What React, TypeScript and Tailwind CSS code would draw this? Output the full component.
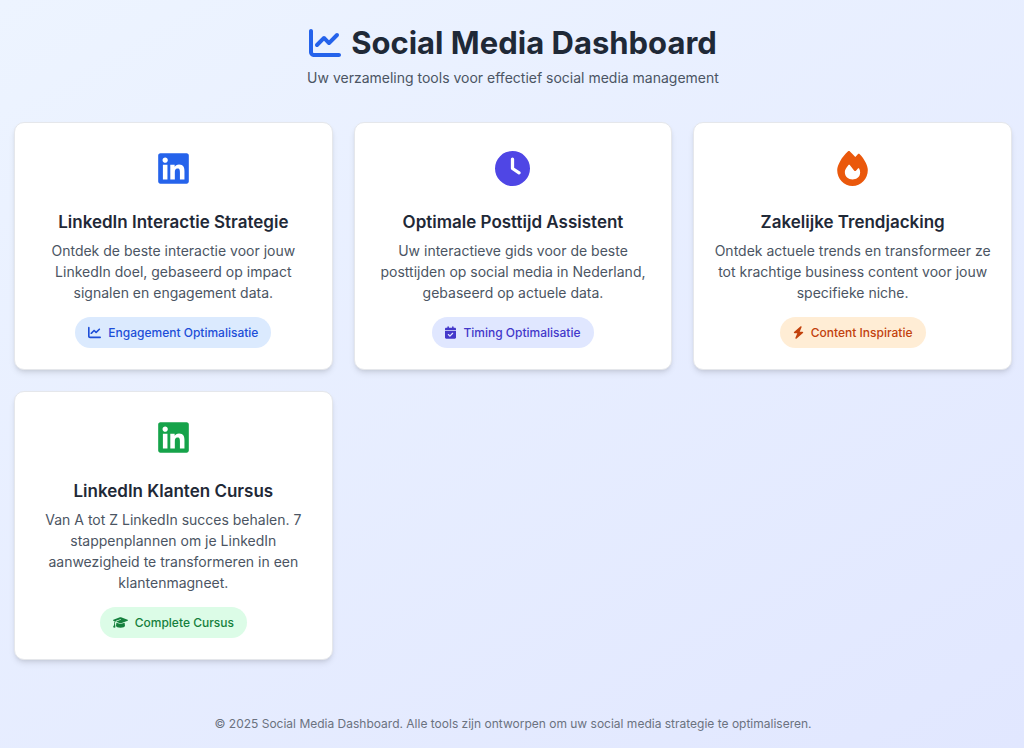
import type { IconType } from 'react-icons';
import {
  FaBolt,
  FaCalendarCheck,
  FaChartLine,
  FaClock,
  FaFire,
  FaGraduationCap,
  FaLinkedin,
} from 'react-icons/fa6';

interface Tool {
  title: string;
  description: string;
  tag: string;
  Icon: IconType;
  TagIcon: IconType;
  iconClass: string;
  tagIconClass: string;
  tagClass: string;
}

const tools: Tool[] = [
  {
    title: 'LinkedIn Interactie Strategie',
    description:
      'Ontdek de beste interactie voor jouw LinkedIn doel, gebaseerd op impact signalen en engagement data.',
    tag: 'Engagement Optimalisatie',
    Icon: FaLinkedin,
    TagIcon: FaChartLine,
    iconClass: 'text-[#2563eb]',
    tagIconClass: 'w-[13px]',
    tagClass: 'bg-[#dbeafe] text-[#1d4ed8]',
  },
  {
    title: 'Optimale Posttijd Assistent',
    description:
      'Uw interactieve gids voor de beste posttijden op social media in Nederland, gebaseerd op actuele data.',
    tag: 'Timing Optimalisatie',
    Icon: FaClock,
    TagIcon: FaCalendarCheck,
    iconClass: 'text-[#4f46e5]',
    tagIconClass: 'w-[11px]',
    tagClass: 'bg-[#e0e7ff] text-[#4338ca]',
  },
  {
    title: 'Zakelijke Trendjacking',
    description:
      'Ontdek actuele trends en transformeer ze tot krachtige business content voor jouw specifieke niche.',
    tag: 'Content Inspiratie',
    Icon: FaFire,
    TagIcon: FaBolt,
    iconClass: 'text-[#ea580c]',
    tagIconClass: 'w-[11px]',
    tagClass: 'bg-[#ffedd5] text-[#c2410c]',
  },
  {
    title: 'LinkedIn Klanten Cursus',
    description:
      'Van A tot Z LinkedIn succes behalen. 7 stappenplannen om je LinkedIn aanwezigheid te transformeren in een klantenmagneet.',
    tag: 'Complete Cursus',
    Icon: FaLinkedin,
    TagIcon: FaGraduationCap,
    iconClass: 'text-[#16a34a]',
    tagIconClass: 'w-[15px]',
    tagClass: 'bg-[#dcfce7] text-[#15803d]',
  },
];

function ToolCard({ title, description, tag, Icon, TagIcon, iconClass, tagIconClass, tagClass }: Tool) {
  return (
    <a
      href="#"
      className="flex flex-col items-center rounded-[10px] border border-[#e5e7eb] bg-white px-5 pt-7 pb-[21px] text-center shadow-md"
    >
      <Icon className={`size-[35px] ${iconClass}`} aria-hidden="true" />
      <h2 className="mt-6 text-[17px] leading-6 font-semibold text-[#1f2937]">{title}</h2>
      <p className="mt-[6px] text-[14px] leading-[21px] text-[#4b5563]">{description}</p>
      <span
        className={`mt-[14px] inline-flex items-center gap-[7px] rounded-full px-[13px] py-[5px] text-[12px] leading-[21px] font-medium ${tagClass}`}
      >
        <TagIcon className={`h-[13px] ${tagIconClass}`} aria-hidden="true" />
        {tag}
      </span>
    </a>
  );
}

export default function App() {
  return (
    <div className="min-h-screen bg-linear-[150deg] from-[#edf4ff] to-[#e1e7ff] pt-[25px] pr-3 pb-4 pl-[14px] font-['Inter',sans-serif]">
      <header className="mb-[34px] text-center">
        <h1 className="flex items-center justify-center gap-[10px] text-[31px] leading-9 font-bold text-[#1f2937]">
          <FaChartLine className="size-8 text-[#2563eb]" aria-hidden="true" />
          Social Media Dashboard
        </h1>
        <p className="mt-[6px] text-[14px] leading-[21px] text-[#4b5563]">
          Uw verzameling tools voor effectief social media management
        </p>
      </header>
      <main className="grid grid-cols-1 items-start gap-[21px] sm:grid-cols-2 lg:grid-cols-3">
        {tools.map((tool) => (
          <ToolCard key={tool.title} {...tool} />
        ))}
      </main>
      <footer className="mt-[55px] text-center text-[12px] leading-[18px] text-[#6b7280]">
        <p>© 2025 Social Media Dashboard. Alle tools zijn ontworpen om uw social media strategie te optimaliseren.</p>
      </footer>
    </div>
  );
}
